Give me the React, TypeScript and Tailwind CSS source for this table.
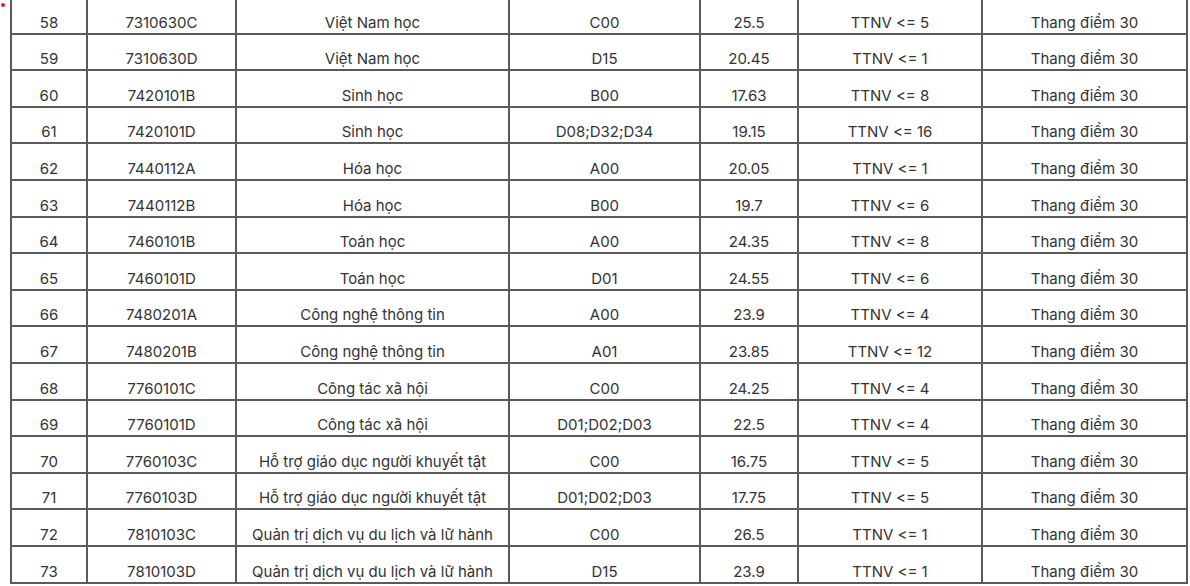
const rows: [string, string, string, string, string, string][] = [
  ["58", "7310630C", "Việt Nam học", "C00", "25.5", "TTNV <= 5"],
  ["59", "7310630D", "Việt Nam học", "D15", "20.45", "TTNV <= 1"],
  ["60", "7420101B", "Sinh học", "B00", "17.63", "TTNV <= 8"],
  ["61", "7420101D", "Sinh học", "D08;D32;D34", "19.15", "TTNV <= 16"],
  ["62", "7440112A", "Hóa học", "A00", "20.05", "TTNV <= 1"],
  ["63", "7440112B", "Hóa học", "B00", "19.7", "TTNV <= 6"],
  ["64", "7460101B", "Toán học", "A00", "24.35", "TTNV <= 8"],
  ["65", "7460101D", "Toán học", "D01", "24.55", "TTNV <= 6"],
  ["66", "7480201A", "Công nghệ thông tin", "A00", "23.9", "TTNV <= 4"],
  ["67", "7480201B", "Công nghệ thông tin", "A01", "23.85", "TTNV <= 12"],
  ["68", "7760101C", "Công tác xã hội", "C00", "24.25", "TTNV <= 4"],
  ["69", "7760101D", "Công tác xã hội", "D01;D02;D03", "22.5", "TTNV <= 4"],
  ["70", "7760103C", "Hỗ trợ giáo dục người khuyết tật", "C00", "16.75", "TTNV <= 5"],
  ["71", "7760103D", "Hỗ trợ giáo dục người khuyết tật", "D01;D02;D03", "17.75", "TTNV <= 5"],
  ["72", "7810103C", "Quản trị dịch vụ du lịch và lữ hành", "C00", "26.5", "TTNV <= 1"],
  ["73", "7810103D", "Quản trị dịch vụ du lịch và lữ hành", "D15", "23.9", "TTNV <= 1"],
];

const widths = ["w-[76px]", "w-[149px]", "w-[273px]", "w-[191px]", "w-[98px]", "w-[184px]", "w-[205px]"];

export default function App() {
  return (
    <div className="bg-white h-[586px] overflow-hidden flex font-['Inter',sans-serif] text-[15px] text-[#333]">
      <div className="w-[10px] shrink-0 pt-[3px] pl-[1px]">
        <div className="w-[4px] h-[4px] rounded-full bg-[#e11d1d]" />
      </div>
      <table className="mt-[-4px] border-collapse table-fixed w-[1177px] self-start">
        <colgroup>
          {widths.map((w, i) => (
            <col key={i} className={w} />
          ))}
        </colgroup>
        <tbody>
          {rows.map((r) => (
            <tr key={r[0]} className="h-[36.6px]">
              {[...r, "Thang điểm 30"].map((c, i) => (
                <td
                  key={i}
                  className="border-2 border-[#5a5a5a] text-center align-bottom pb-0 leading-[20px] whitespace-nowrap"
                >
                  {c}
                </td>
              ))}
            </tr>
          ))}
        </tbody>
      </table>
    </div>
  );
}
